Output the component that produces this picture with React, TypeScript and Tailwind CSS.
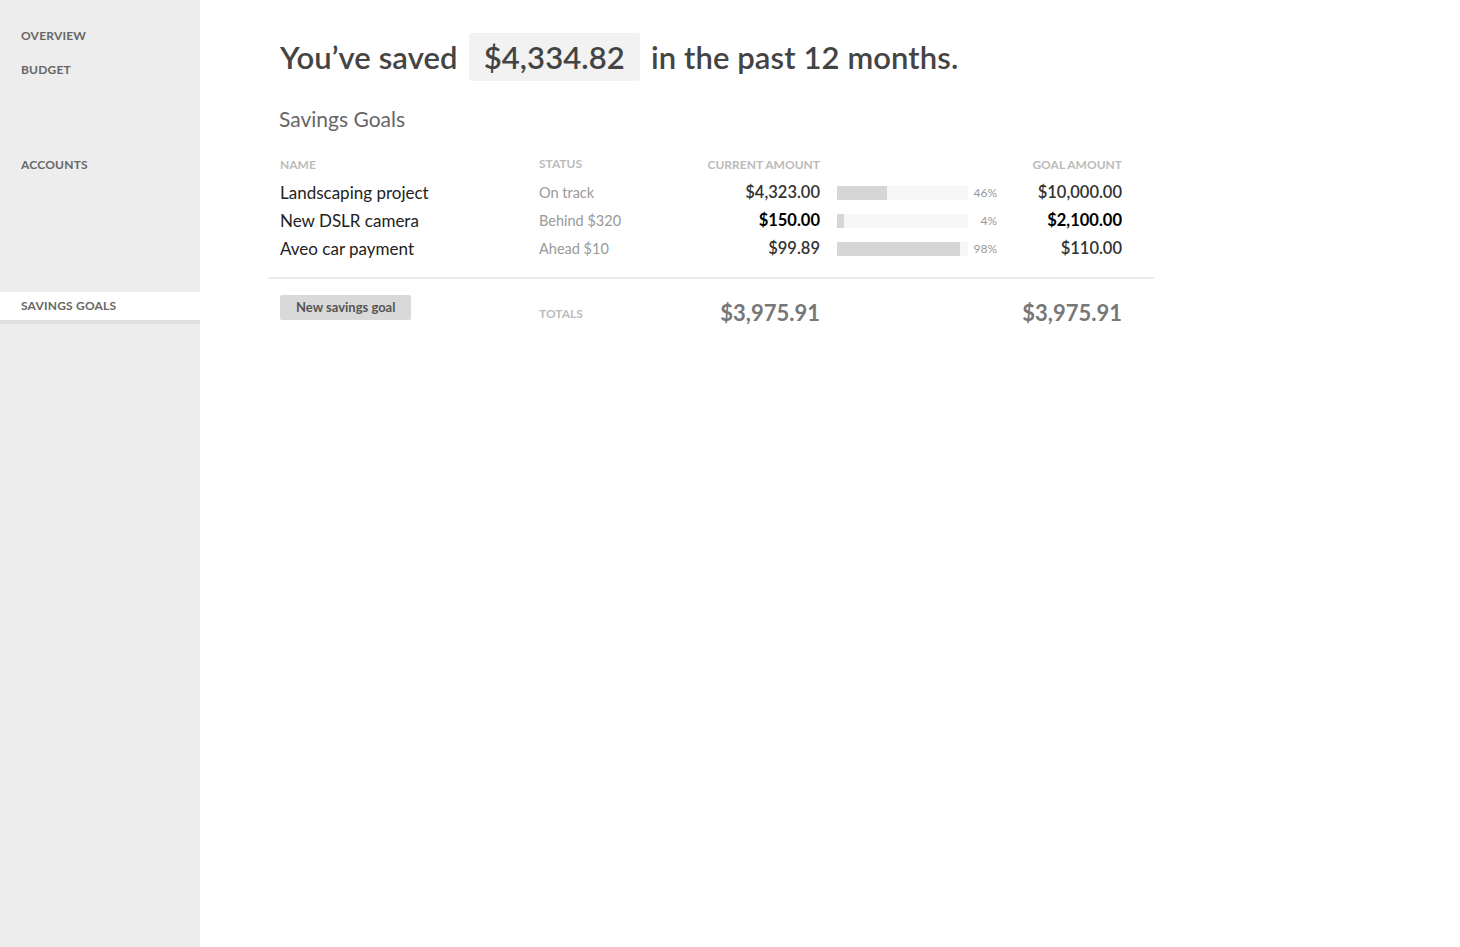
const goals = [
  { name: "Landscaping project", status: "On track", current: "$4,323.00", pct: 46, bar: 50, goal: "$10,000.00", strong: false },
  { name: "New DSLR camera", status: "Behind $320", current: "$150.00", pct: 4, bar: 7, goal: "$2,100.00", strong: true },
  { name: "Aveo car payment", status: "Ahead $10", current: "$99.89", pct: 98, bar: 123, goal: "$110.00", strong: false },
];

const cols = "grid grid-cols-[259px_140px_141px_17px_131px_29px_125px]";

function NavItem({ label, active, className }: { label: string; active?: boolean; className?: string }) {
  return (
    <a
      href="#"
      className={`flex h-7 items-center pl-[21px] text-[12px] font-bold uppercase tracking-[0.2px] text-[#666] ${
        active ? "border-b-4 border-[#e0e0e0] bg-white box-content" : ""
      } ${className ?? ""}`}
    >
      {label}
    </a>
  );
}

export default function App() {
  return (
    <div className="flex min-h-[947px] bg-white font-['Lato','Open_Sans',sans-serif] text-[#333]">
      <aside className="flex w-[200px] shrink-0 flex-col bg-[#ededed] pt-[22px]">
        <NavItem label="Overview" />
        <NavItem label="Budget" className="mt-[6px]" />
        <NavItem label="Accounts" className="mt-[67px]" />
        <NavItem label="Savings Goals" active className="mt-[114px] -translate-y-px" />
      </aside>

      <main className="flex-1 pl-[68px] pt-[33px]">
        <h1 className="flex items-center pl-[12px] text-[31px] font-semibold tracking-[0.1px] text-[#444]">
          <span>You’ve saved</span>
          <span className="mx-[11px] flex h-[48px] items-center rounded-[3px] bg-[#f2f2f2] px-[15px]">$4,334.82</span>
          <span>in the past 12 months.</span>
        </h1>

        <h2 className="mt-[22px] pl-[11px] text-[21px] font-normal text-[#666]">Savings Goals</h2>

        <div className="mt-[16px] w-[886px]">
          <div className="px-[12px] pb-[14px]">
            <div className={`${cols} h-[28px] items-center text-[12px] font-bold uppercase text-[#bbb]`}>
              <span>Name</span>
              <span className="-mt-[2px]">Status</span>
              <span className="text-right">Current Amount</span>
              <span />
              <span />
              <span />
              <span className="text-right">Goal Amount</span>
            </div>
            {goals.map((g) => (
              <div key={g.name} className={`${cols} h-[28px] items-center`}>
                <span className="text-[17px] text-[#222]">{g.name}</span>
                <span className="text-[14.5px] text-[#999]">{g.status}</span>
                <span className={`text-right text-[16.5px] ${g.strong ? "font-bold text-black" : "font-semibold text-[#333]"}`}>
                  {g.current}
                </span>
                <span />
                <div className="h-[14px] bg-[#f7f7f7]">
                  <div className="h-full bg-[#d6d6d6]" style={{ width: g.bar }} />
                </div>
                <span className="text-right text-[12px] text-[#999]">{g.pct}%</span>
                <span className={`text-right text-[16.5px] ${g.strong ? "font-bold text-black" : "font-semibold text-[#333]"}`}>
                  {g.goal}
                </span>
              </div>
            ))}
          </div>

          <div className="h-[2px] bg-[#ebebeb]" />

          <div className={`${cols} items-start px-[12px] pt-[15px]`}>
            <div>
              <button className="h-[25px] rounded-[2px] bg-[#d9d9d9] px-[16px] text-[13px] font-bold text-[#555]">
                New savings goal
              </button>
            </div>
            <span className="mt-[11px] text-[12px] font-bold uppercase text-[#bbb]">Totals</span>
            <span className="mt-[2px] text-right text-[22px] leading-[33px] font-bold text-[#777]">$3,975.91</span>
            <span />
            <span />
            <span />
            <span className="mt-[2px] text-right text-[22px] leading-[33px] font-bold text-[#777]">$3,975.91</span>
          </div>
        </div>
      </main>
    </div>
  );
}
